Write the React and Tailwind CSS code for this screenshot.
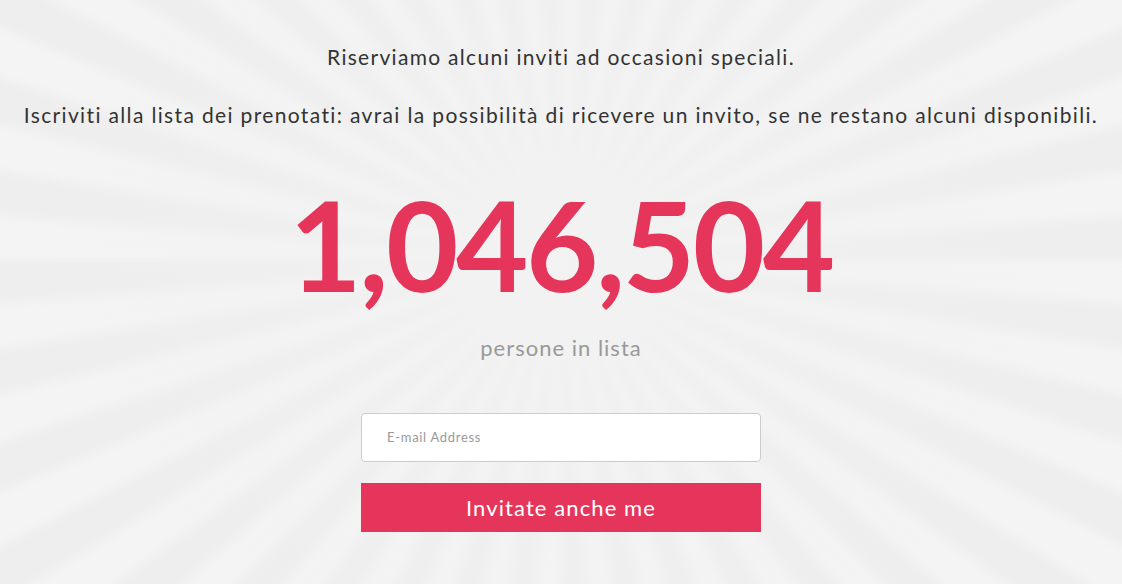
import React from "react";

function Sunburst() {
  const cx = 561;
  const cy = 260;
  const n = 40;
  const R = 1400;
  const wedges = [];
  for (let i = 0; i < n; i++) {
    const a0 = (i / n) * Math.PI * 2;
    const a1 = a0 + (Math.PI * 2) / n / 2;
    const x0 = cx + R * Math.cos(a0);
    const y0 = cy + R * Math.sin(a0);
    const x1 = cx + R * Math.cos(a1);
    const y1 = cy + R * Math.sin(a1);
    wedges.push(
      <polygon key={i} points={`${cx},${cy} ${x0},${y0} ${x1},${y1}`} fill="#ffffff" />
    );
  }
  return (
    <svg className="absolute inset-0 w-full h-full" viewBox="0 0 1122 584" preserveAspectRatio="none">
      <defs>
        <filter id="blur" x="-10%" y="-10%" width="120%" height="120%">
          <feGaussianBlur stdDeviation="5" />
        </filter>
        <radialGradient id="fade" cx={cx} cy={cy} r="650" gradientUnits="userSpaceOnUse">
          <stop offset="0" stopColor="#f3f3f3" stopOpacity="0.7" />
          <stop offset="1" stopColor="#eeeeee" stopOpacity="0" />
        </radialGradient>
      </defs>
      <rect x="0" y="0" width="1122" height="584" fill="#eeeeee" />
      <g filter="url(#blur)" opacity="0.38">{wedges}</g>
      <rect x="0" y="0" width="1122" height="584" fill="url(#fade)" />
    </svg>
  );
}

export default function App() {
  return (
    <div className="relative w-[1122px] h-[584px] overflow-hidden bg-[#efefef]" style={{ fontFamily: "Lato, 'Open Sans', sans-serif" }}>
      <Sunburst />
      <div className="relative flex flex-col items-center pt-[43px]">
        <p className="text-[21px] leading-[28px] tracking-[1.3px] text-[#333333] whitespace-nowrap">Riserviamo alcuni inviti ad occasioni speciali.</p>
        <p className="mt-[30px] text-[21px] leading-[28px] tracking-[1.35px] text-[#333333] whitespace-nowrap">
          Iscriviti alla lista dei prenotati: avrai la possibilità di ricevere un invito, se ne restano alcuni disponibili.
        </p>
        <div className="mt-[53px] text-[125px] leading-[125px] font-bold text-[#e6355a] tracking-[-2.5px] whitespace-nowrap">1,046,504</div>
        <div className="mt-[26px] text-[22px] leading-[30px] tracking-[1px] text-[#999999]">persone in lista</div>
        <div className="mt-[50px] w-[400px] h-[49px] bg-white border border-[#cccccc] rounded-[4px] flex items-center pl-[25px]">
          <span className="text-[13px] tracking-[0.7px] text-[#999999]">E-mail Address</span>
        </div>
        <button className="mt-[21px] w-[400px] h-[49px] bg-[#e6355a] text-white text-[22px] tracking-[1.1px] flex items-center justify-center">
          Invitate anche me
        </button>
      </div>
    </div>
  );
}
